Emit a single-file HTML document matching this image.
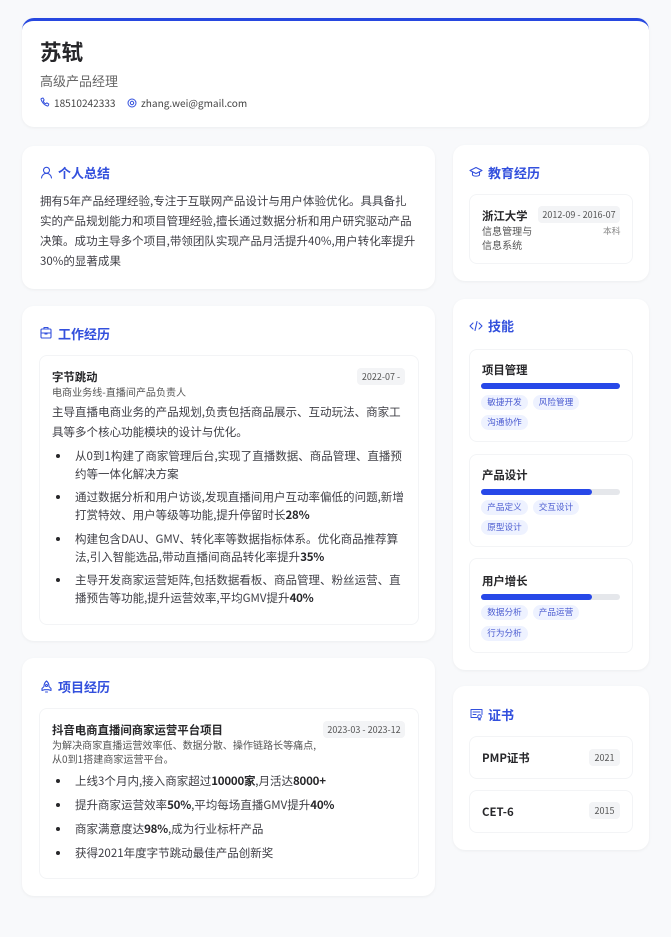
<!DOCTYPE html>
<html lang="zh"><head><meta charset="utf-8"><title>苏轼</title>
<style>
*{margin:0;padding:0;box-sizing:border-box}
html,body{width:671px;height:937px;overflow:hidden;background:#f8f9fb}
body{position:relative;font-family:"Noto Sans CJK SC","Liberation Sans",sans-serif;color:#333}
.card{position:absolute;background:#fff;border-radius:12px;box-shadow:0 1px 3px rgba(0,0,0,.05)}
.sub{position:absolute;background:#fff;border:1px solid #f3f4f6;border-radius:8px}
.t{position:absolute;white-space:nowrap;line-height:20px;height:20px}
.h{font-size:13px;font-weight:700;color:#3350dd}
.b{font-size:11.52px;color:#3f3f46}
.b b{color:#27272a;font-weight:700;letter-spacing:-.25px}
.n{font-size:11.4px;font-weight:700;color:#27272a}
.s{font-size:10.05px;color:#555}
.d{position:absolute;background:#f3f4f6;border-radius:4px;font-size:9px;color:#555;text-align:center;height:17px;line-height:17px;white-space:nowrap}
.dot{position:absolute;width:4px;height:4px;border-radius:50%;background:#27272a}
.bar{position:absolute;height:6px;width:139px;left:481px;background:#e5e7eb;border-radius:3px}
.bar i{display:block;height:6px;background:#2748e8;border-radius:3px}
.tag{position:absolute;height:15px;line-height:15px;width:47px;text-align:center;background:#eef2ff;color:#4a5bd0;font-size:8.6px;border-radius:8px;white-space:nowrap}
svg{position:absolute;fill:none;stroke:#3350dd;stroke-linecap:round;stroke-linejoin:round}
</style></head><body>

<div class="card" style="left:22px;top:18px;width:627px;height:109px;border-top:3px solid #2748e0"></div>
<div class="t" style="left:40px;top:37px;height:30px;line-height:30px;font-size:21.6px;font-weight:700;color:#27272a">苏轼</div>
<div class="t" style="left:40px;top:71px;font-size:13px;color:#666">高级产品经理</div>
<svg style="left:40px;top:97px" width="10" height="11" viewBox="0 0 10 11" stroke-width="1"><path d="M1.500 1.500 3 1l1.200 2-1 1c.4 1.200 1.400 2.300 2.600 2.800l1-1 2 1.300-.5 1.400c-.2.4-.6.6-1 .5C4.500 8.200 1.800 5.500 1 2.300c-.1-.3.1-.7.5-.8z"/></svg>
<div class="t" style="left:54px;top:93px;font-size:10.08px;color:#444">18510242333</div>
<svg style="left:127px;top:98px" width="10" height="10" viewBox="0 0 10 10" stroke-width="1"><circle cx="5" cy="5" r="1.700"/><circle cx="5" cy="5" r="4"/></svg>
<div class="t" style="left:141px;top:93px;font-size:10.08px;color:#444">zhang.wei@gmail.com</div>

<!-- 个人总结 -->
<div class="card" style="left:22px;top:146px;width:413px;height:143px"></div>
<svg style="left:40px;top:166px" width="13" height="13" viewBox="0 0 13 13" stroke-width="1.100"><circle cx="6.500" cy="4.300" r="3"/><path d="M1.500 12c.4-2.700 2.300-4.700 5-4.700s4.600 2 5 4.700"/></svg>
<div class="t h" style="left:58px;top:163px">个人总结</div>
<div class="t b" style="left:40px;top:191px">拥有5年产品经理经验,专注于互联网产品设计与用户体验优化。具具备扎</div>
<div class="t b" style="left:40px;top:211px">实的产品规划能力和项目管理经验,擅长通过数据分析和用户研究驱动产品</div>
<div class="t b" style="left:40px;top:231px">决策。成功主导多个项目,带领团队实现产品月活提升40%,用户转化率提升</div>
<div class="t b" style="left:40px;top:251px">30%的显著成果</div>

<!-- 工作经历 -->
<div class="card" style="left:22px;top:306px;width:413px;height:335px"></div>
<svg style="left:40px;top:326px" width="12" height="13" viewBox="0 0 12 13" stroke-width="1.100"><rect x="1" y="3" width="10" height="9" rx="1"/><path d="M4 3V1.500h4V3M1 7h10M5 7v1h2V7"/></svg>
<div class="t h" style="left:58px;top:324px">工作经历</div>
<div class="sub" style="left:39px;top:355px;width:380px;height:270px"></div>
<div class="t n" style="left:52px;top:367px">字节跳动</div>
<div class="d" style="left:357px;top:368px;width:48px">2022-07 -</div>
<div class="t s" style="left:52px;top:382px">电商业务线-直播间产品负责人</div>
<div class="t b" style="left:52px;top:402px">主导直播电商业务的产品规划,负责包括商品展示、互动玩法、商家工</div>
<div class="t b" style="left:52px;top:422px">具等多个核心功能模块的设计与优化。</div>
<div class="dot" style="left:56px;top:454px"></div>
<div class="t b" style="left:75px;top:446px">从0到1构建了商家管理后台,实现了直播数据、商品管理、直播预</div>
<div class="t b" style="left:75px;top:464px">约等一体化解决方案</div>
<div class="dot" style="left:56px;top:495px"></div>
<div class="t b" style="left:75px;top:487px">通过数据分析和用户访谈,发现直播间用户互动率偏低的问题,新增</div>
<div class="t b" style="left:75px;top:505px">打赏特效、用户等级等功能,提升停留时长<b>28%</b></div>
<div class="dot" style="left:56px;top:537px"></div>
<div class="t b" style="left:75px;top:529px">构建包含DAU、GMV、转化率等数据指标体系。优化商品推荐算</div>
<div class="t b" style="left:75px;top:547px">法,引入智能选品,带动直播间商品转化率提升<b>35%</b></div>
<div class="dot" style="left:56px;top:578px"></div>
<div class="t b" style="left:75px;top:570px">主导开发商家运营矩阵,包括数据看板、商品管理、粉丝运营、直</div>
<div class="t b" style="left:75px;top:588px">播预告等功能,提升运营效率,平均GMV提升<b>40%</b></div>

<!-- 项目经历 -->
<div class="card" style="left:22px;top:658px;width:413px;height:238px"></div>
<svg style="left:40px;top:680px" width="13" height="13" viewBox="0 0 13 13" stroke-width="1.100"><path d="M6.500 1C4.500 2.500 4 4.500 4 6.500L2 8.500v2l2.500-.8h4l2.500.8v-2L9 6.500C9 4.500 8.500 2.500 6.500 1z"/><circle cx="6.500" cy="5.500" r="1"/><path d="M5.500 12h2"/></svg>
<div class="t h" style="left:58px;top:677px">项目经历</div>
<div class="sub" style="left:39px;top:708px;width:380px;height:171px"></div>
<div class="t n" style="left:52px;top:720px">抖音电商直播间商家运营平台项目</div>
<div class="d" style="left:323px;top:721px;width:82px">2023-03 - 2023-12</div>
<div class="t s" style="left:52px;top:735px">为解决商家直播运营效率低、数据分散、操作链路长等痛点,</div>
<div class="t s" style="left:52px;top:749px">从0到1搭建商家运营平台。</div>
<div class="dot" style="left:56px;top:779px"></div>
<div class="t b" style="left:75px;top:771px">上线3个月内,接入商家超过<b>10000家</b>,月活达<b>8000+</b></div>
<div class="dot" style="left:56px;top:803px"></div>
<div class="t b" style="left:75px;top:795px">提升商家运营效率<b>50%</b>,平均每场直播GMV提升<b>40%</b></div>
<div class="dot" style="left:56px;top:827px"></div>
<div class="t b" style="left:75px;top:819px">商家满意度达<b>98%</b>,成为行业标杆产品</div>
<div class="dot" style="left:56px;top:851px"></div>
<div class="t b" style="left:75px;top:843px">获得2021年度字节跳动最佳产品创新奖</div>

<!-- 教育经历 -->
<div class="card" style="left:453px;top:145px;width:196px;height:136px"></div>
<svg style="left:469px;top:166px" width="14" height="13" viewBox="0 0 14 13" stroke-width="1.100"><path d="M7 1.500 1 4.500l6 3 6-3z"/><path d="M3.500 6v3c1 1.500 6 1.500 7 0V6"/></svg>
<div class="t h" style="left:488px;top:163px">教育经历</div>
<div class="sub" style="left:469px;top:194px;width:164px;height:70px"></div>
<div class="t n" style="left:482px;top:206px">浙江大学</div>
<div class="d" style="left:538px;top:206px;width:82px">2012-09 - 2016-07</div>
<div class="t s" style="left:482px;top:221px">信息管理与</div>
<div class="t s" style="left:482px;top:235px">信息系统</div>
<div class="t" style="left:603px;top:221px;font-size:8.8px;color:#888">本科</div>

<!-- 技能 -->
<div class="card" style="left:453px;top:299px;width:196px;height:371px"></div>
<svg style="left:469px;top:320px" width="14" height="12" viewBox="0 0 14 12" stroke-width="1.100"><path d="M4 3 1 6l3 3M10 3l3 3-3 3M8 1.500l-2 9"/></svg>
<div class="t h" style="left:488px;top:316px">技能</div>

<div class="sub" style="left:469px;top:349px;width:164px;height:93px"></div>
<div class="t n" style="left:482px;top:360px">项目管理</div>
<div class="bar" style="top:383px"><i style="width:100%"></i></div>
<div class="tag" style="left:481px;top:395px">敏捷开发</div>
<div class="tag" style="left:533px;top:395px;width:46px">风险管理</div>
<div class="tag" style="left:481px;top:415px">沟通协作</div>

<div class="sub" style="left:469px;top:454px;width:164px;height:93px"></div>
<div class="t n" style="left:482px;top:465px">产品设计</div>
<div class="bar" style="top:489px"><i style="width:80%"></i></div>
<div class="tag" style="left:481px;top:500px">产品定义</div>
<div class="tag" style="left:533px;top:500px;width:46px">交互设计</div>
<div class="tag" style="left:481px;top:520px">原型设计</div>

<div class="sub" style="left:469px;top:558px;width:164px;height:95px"></div>
<div class="t n" style="left:482px;top:571px">用户增长</div>
<div class="bar" style="top:594px"><i style="width:80%"></i></div>
<div class="tag" style="left:481px;top:605px">数据分析</div>
<div class="tag" style="left:533px;top:605px;width:46px">产品运营</div>
<div class="tag" style="left:481px;top:626px">行为分析</div>

<!-- 证书 -->
<div class="card" style="left:453px;top:686px;width:196px;height:164px"></div>
<svg style="left:470px;top:708px" width="13" height="13" viewBox="0 0 13 13" stroke-width="1"><path d="M7 9.500H1V1.500h11v5"/><path d="M3 4h7M3 6.500h3"/><circle cx="9.500" cy="8.500" r="1.800"/><path d="M8.800 10.500v1.500l.7-.4.7.4v-1.500"/></svg>
<div class="t h" style="left:488px;top:705px">证书</div>
<div class="sub" style="left:469px;top:736px;width:164px;height:43px"></div>
<div class="t n" style="left:482px;top:748px">PMP证书</div>
<div class="d" style="left:589px;top:749px;width:31px">2021</div>
<div class="sub" style="left:469px;top:790px;width:164px;height:43px"></div>
<div class="t n" style="left:482px;top:802px">CET-6</div>
<div class="d" style="left:589px;top:802px;width:31px">2015</div>

</body></html>
